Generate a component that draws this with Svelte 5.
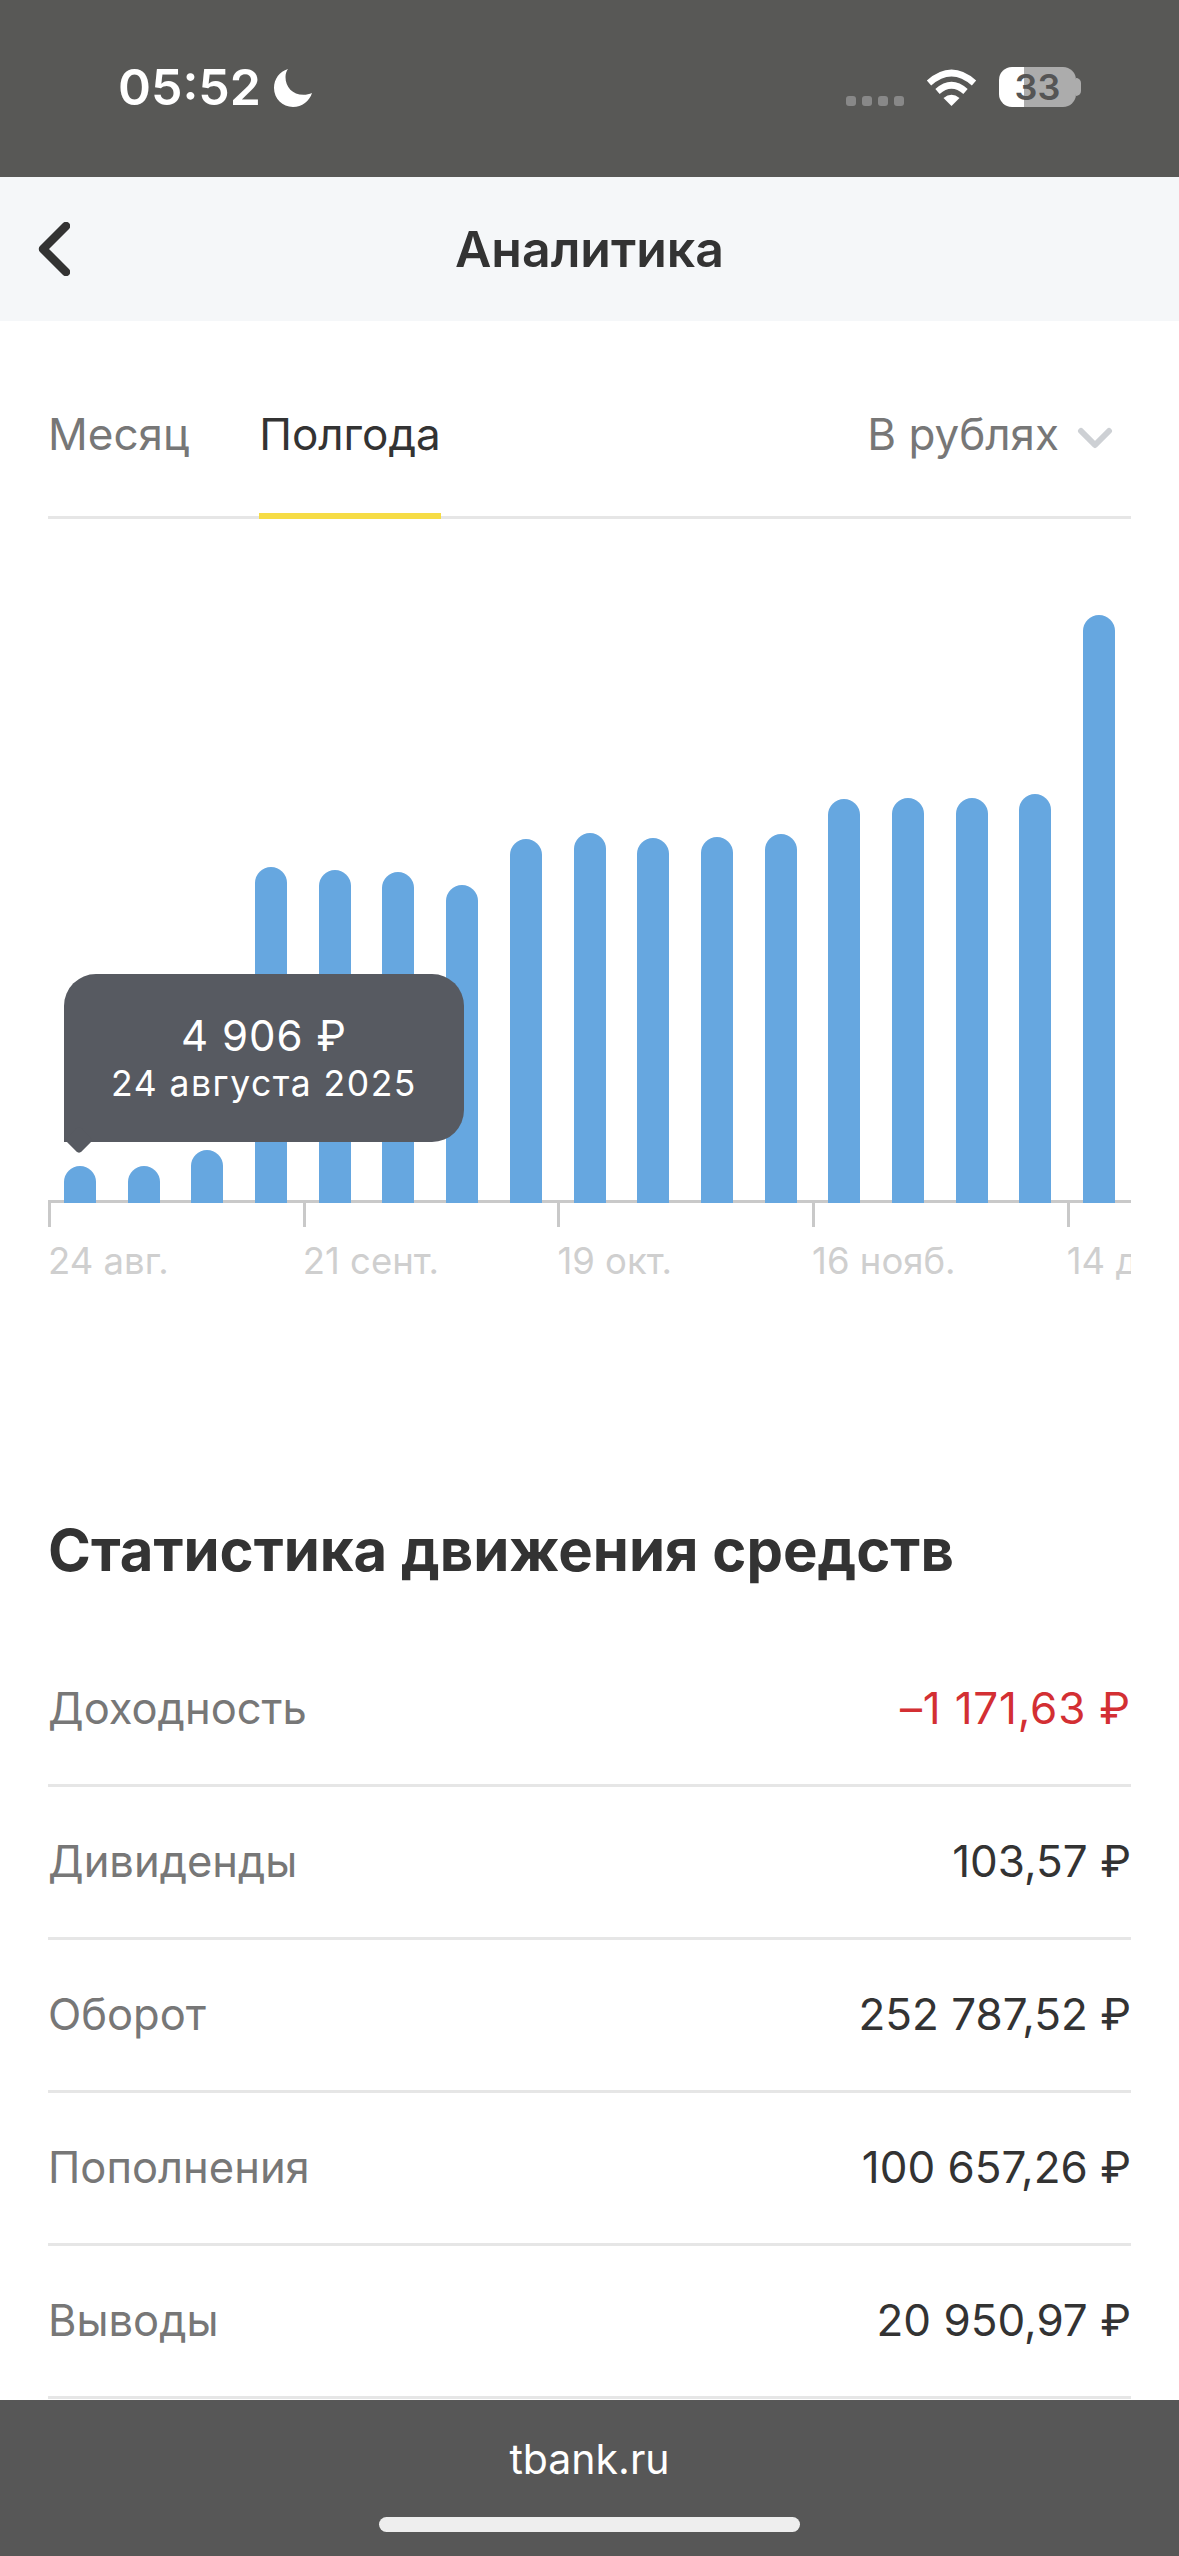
<script>
  const bars = [1166, 1166, 1150, 867, 870, 872, 885, 839, 833, 838, 837, 834, 799, 798, 798, 794, 615];
  const axisBottom = 1203;
  const ticks = ["24 авг.", "21 сент.", "19 окт.", "16 нояб.", "14 дек."];
  const rows = [
    { label: "Доходность", value: "–1 171,63 ₽", negative: true },
    { label: "Дивиденды", value: "103,57 ₽" },
    { label: "Оборот", value: "252 787,52 ₽" },
    { label: "Пополнения", value: "100 657,26 ₽" },
    { label: "Выводы", value: "20 950,97 ₽" }
  ];
</script>

<div class="screen">
  <header class="status">
    <div class="clock">
      <span class="time">05:52</span>
      <svg class="moon" viewBox="0 0 39 39"><path d="M14 1C5.500 3.500 0 11 0 20c0 10.500 8.500 19 19 19 9 0 16.500-6 19-14-2.500 1.200-5.500 1.800-8.500 1.800C18.500 26.800 11.500 19 11.500 9c0-3 .8-5.800 2.500-8z" fill="#fff"/></svg>
    </div>
    <div class="indicators">
      <div class="dots"><i></i><i></i><i></i><i></i></div>
      <svg class="wifi" viewBox="0 0 51 37">
        <path d="M3 14Q25.500-6 48 14" fill="none" stroke="#fff" stroke-width="6.500"/>
        <path d="M11.500 22.500Q25.500 10 39.500 22.500" fill="none" stroke="#fff" stroke-width="6.500"/>
        <path d="M17.500 29Q25.500 22.500 33.500 29L25.500 37Z" fill="#fff"/>
      </svg>
      <div class="battery"><span>33</span></div>
      <div class="battery-cap"></div>
    </div>
  </header>

  <nav class="navbar">
    <svg class="back" viewBox="0 0 32 54"><path d="M28 4L5 27l23 23" fill="none" stroke="#333" stroke-width="8.500" stroke-linecap="round" stroke-linejoin="round"/></svg>
    <h1>Аналитика</h1>
  </nav>

  <main class="content">
    <div class="tabs">
      <div class="tab">Месяц</div>
      <div class="tab active">Полгода</div>
      <div class="currency">
        В рублях
        <svg viewBox="0 0 36 22"><path d="M4 4l14 14L32 4" fill="none" stroke="#cdd0d4" stroke-width="6" stroke-linecap="round" stroke-linejoin="round"/></svg>
      </div>
    </div>

    <section class="chart">
      <div class="bars">
        {#each bars as top}
          <div class="bar" style="height: {axisBottom - top}px"></div>
        {/each}
      </div>
      <div class="axis">
        {#each ticks as t}
          <div class="tick"><span>{t}</span></div>
        {/each}
      </div>
      <div class="tooltip">
        <div class="amount">4 906 ₽</div>
        <div class="date">24 августа 2025</div>
      </div>
    </section>

    <h2>Статистика движения средств</h2>
    <div class="stats">
      {#each rows as r}
        <div class="row">
          <span class="label">{r.label}</span>
          <span class="value" class:negative={r.negative}>{r.value}</span>
        </div>
      {/each}
    </div>
  </main>

  <footer class="bottom">
    <div class="url">tbank.ru</div>
    <div class="home"></div>
  </footer>
</div>

<style>
  :global(body) {
    margin: 0;
    background: #fff;
  }
  .screen {
    width: 1179px;
    height: 2556px;
    overflow: hidden;
    display: flex;
    flex-direction: column;
    font-family: Inter, "Noto Sans", sans-serif;
    color: #333;
  }
  .status {
    height: 177px;
    flex: none;
    background: #585856;
    display: flex;
    justify-content: space-between;
    align-items: flex-start;
    padding: 60px 98px 0 118px;
    box-sizing: border-box;
  }
  .clock {
    display: flex;
    align-items: center;
    gap: 13px;
  }
  .time {
    font-size: 50px;
    line-height: 54px;
    font-weight: 600;
    color: #fff;
  }
  .moon {
    width: 39px;
    height: 39px;
  }
  .indicators {
    display: flex;
    align-items: flex-start;
    padding-top: 7px;
  }
  .dots {
    display: flex;
    gap: 6px;
    margin-top: 29px;
    margin-right: 22px;
  }
  .dots i {
    width: 10px;
    height: 10px;
    border-radius: 3px;
    background: #888;
  }
  .wifi {
    width: 51px;
    height: 37px;
    margin-top: 2px;
    margin-right: 22px;
  }
  .battery {
    width: 77px;
    height: 40px;
    border-radius: 13px;
    background: linear-gradient(90deg, #fff 25px, #acacac 25px);
    display: flex;
    align-items: center;
    justify-content: center;
    font-size: 36px;
    font-weight: 600;
    color: #555;
  }
  .battery-cap {
    width: 5px;
    height: 18px;
    margin-top: 11px;
    border-radius: 0 9px 9px 0;
    background: #acacac;
  }
  .navbar {
    height: 144px;
    flex: none;
    background: #f5f7f9;
    position: relative;
    display: flex;
    align-items: center;
    justify-content: center;
  }
  .back {
    position: absolute;
    left: 38px;
    top: 45px;
    width: 32px;
    height: 54px;
  }
  h1 {
    margin: 0;
    font-size: 50px;
    font-weight: 600;
  }
  .content {
    flex: 1;
    padding: 0 48px;
    min-height: 0;
  }
  .tabs {
    height: 198px;
    box-sizing: border-box;
    border-bottom: 3px solid #e6e6e6;
    display: flex;
    align-items: flex-end;
    font-size: 44px;
  }
  .tab {
    height: 112px;
    box-sizing: border-box;
    margin-bottom: -3px;
    color: #777;
    margin-right: 70px;
    line-height: 54px;
  }
  .tab.active {
    color: #333;
    border-bottom: 6px solid #f6dc45;
  }
  .currency {
    margin-left: auto;
    height: 112px;
    margin-bottom: -3px;
    color: #777;
    line-height: 54px;
    margin-right: 18px;
    display: flex;
    align-items: flex-start;
    gap: 18px;
  }
  .currency svg {
    width: 36px;
    height: 22px;
    margin-top: 20px;
  }
  .chart {
    position: relative;
    height: 1000px;
  }
  .bars {
    height: 684px;
    display: flex;
    justify-content: space-between;
    align-items: flex-end;
    padding: 0 16px;
  }
  .bar {
    width: 32px;
    background: #66a7e0;
    border-radius: 16px 16px 0 0;
  }
  .axis {
    display: grid;
    grid-template-columns: repeat(5, 254.7px);
    overflow: hidden;
    height: 90px;
    margin-top: -3px;
    border-top: 3px solid #c9c9c9;
    box-sizing: border-box;
  }
  .tick {
    height: 24px;
    border-left: 3px solid #c9c9c9;
    white-space: nowrap;
    font-size: 36.500px;
    color: #cfcfcf;
  }
  .tick span {
    display: block;
    margin-left: -3px;
    padding-top: 38px;
    line-height: 40px;
  }
  .tooltip {
    position: absolute;
    left: 16px;
    top: 455px;
    width: 400px;
    height: 168px;
    border-radius: 32px 32px 32px 0;
    background: #575a61;
    color: #fff;
    text-align: center;
    box-sizing: border-box;
    padding-top: 37px;
  }
  .tooltip::after {
    content: "";
    position: absolute;
    left: 5px;
    bottom: -8px;
    width: 20px;
    height: 20px;
    border-radius: 4px;
    background: #575a61;
    transform: rotate(45deg);
  }
  .amount {
    font-size: 42px;
    line-height: 50px;
    letter-spacing: 1px;
  }
  .date {
    font-size: 35.500px;
    line-height: 46px;
    letter-spacing: 1.500px;
  }
  h2 {
    margin: 0;
    height: 115px;
    font-size: 58px;
    line-height: 62px;
    font-weight: 700;
  }
  .row {
    height: 153px;
    box-sizing: border-box;
    border-bottom: 3px solid #e6e6e6;
    padding-bottom: 3px;
    display: flex;
    justify-content: space-between;
    align-items: center;
    font-size: 44px;
  }
  .label {
    color: #777;
    font-size: 43.500px;
  }
  .negative {
    color: #d32f33;
    letter-spacing: 0.800px;
  }
  .bottom {
    height: 156px;
    flex: none;
    background: #575757;
    display: flex;
    flex-direction: column;
    align-items: center;
    color: #fff;
  }
  .url {
    font-size: 41px;
    line-height: 50px;
    margin-top: 34px;
  }
  .home {
    width: 421px;
    height: 15px;
    border-radius: 8px;
    background: #eee;
    margin-top: 33px;
  }
</style>
